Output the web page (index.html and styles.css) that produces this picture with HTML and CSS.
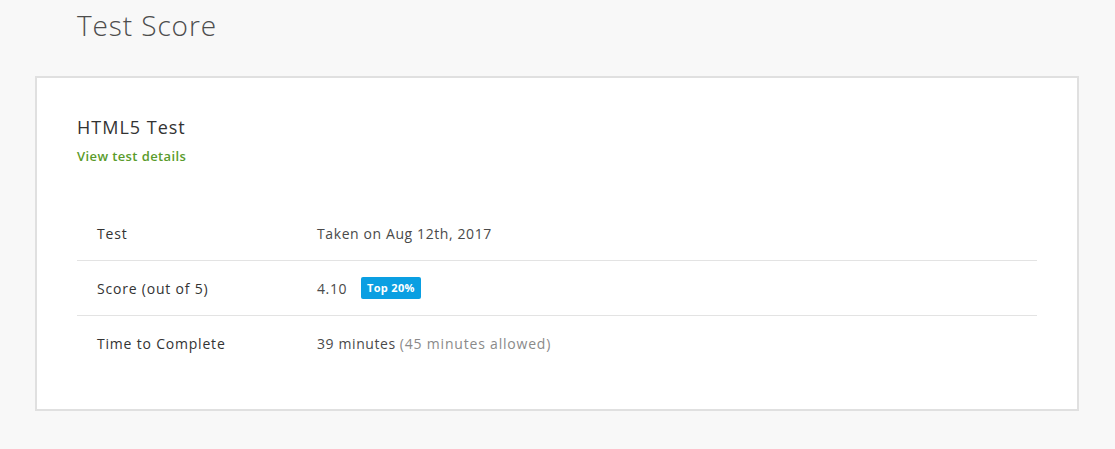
FILE: index.html
```html
<!DOCTYPE html>
<html>
<head>
<meta charset="utf-8">
<link rel="stylesheet" href="styles.css">
</head>
<body>
<div class="page">
  <h1 class="page-title">Test Score</h1>
  <section class="card">
    <h2 class="test-name">HTML5 Test</h2>
    <a class="details-link" href="#">View test details</a>
    <div class="rows">
      <div class="row">
        <div class="label">Test</div>
        <div class="value">Taken on Aug 12th, 2017</div>
      </div>
      <div class="row">
        <div class="label">Score (out of 5)</div>
        <div class="value">4.10 <span class="badge">Top 20%</span></div>
      </div>
      <div class="row">
        <div class="label">Time to Complete</div>
        <div class="value">39 minutes <span class="muted">(45 minutes allowed)</span></div>
      </div>
    </div>
  </section>
</div>
</body>
</html>
```
FILE: styles.css
```css
html, body {
  margin: 0;
  padding: 0;
}
body {
  background: #f8f8f8;
  font-family: "Open Sans", "Liberation Sans", sans-serif;
  color: #4a4a4a;
}
.page {
  padding: 0 35px 0 35px;
  width: 1044px;
}
.page-title {
  margin: 0;
  padding: 6px 0 0 42px;
  height: 76px;
  box-sizing: border-box;
  font-size: 28px;
  font-weight: 300;
  color: #4d4d4d;
  line-height: 38px;
  letter-spacing: 0.9px;
}
.card {
  background: #fff;
  border: 2px solid #e0e0e0;
  padding: 36px 40px 40px 40px;
  height: 335px;
  box-sizing: border-box;
}
.test-name {
  margin: 0;
  font-size: 18px;
  font-weight: 400;
  color: #333;
  line-height: 26px;
  letter-spacing: 1px;
}
.details-link {
  display: block;
  margin-top: 6px;
  font-size: 13px;
  font-weight: 600;
  color: #5a9b2b;
  text-decoration: none;
  line-height: 20px;
  letter-spacing: 0.4px;
}
.rows {
  margin-top: 40px;
}
.row {
  display: flex;
  align-items: center;
  height: 55px;
  box-sizing: border-box;
  padding: 0 20px;
  font-size: 14px;
  border-bottom: 1px solid #e3e3e3;
}
.row:last-child {
  border-bottom: none;
}
.label {
  width: 220px;
  color: #333;
  font-weight: 500;
  letter-spacing: 0.8px;
}
.value {
  color: #4a4a4a;
  display: flex;
  align-items: center;
  letter-spacing: 0.6px;
}
.badge {
  display: inline-block;
  margin-left: 14px;
  background: #0a9fe2;
  color: #fff;
  font-size: 11px;
  font-weight: 700;
  padding: 0 6px;
  height: 22px;
  line-height: 22px;
  border-radius: 2px;
  letter-spacing: 0.3px;
}
.muted {
  color: #8a8a8a;
  margin-left: 4px;
  letter-spacing: 0.8px;
}
```
